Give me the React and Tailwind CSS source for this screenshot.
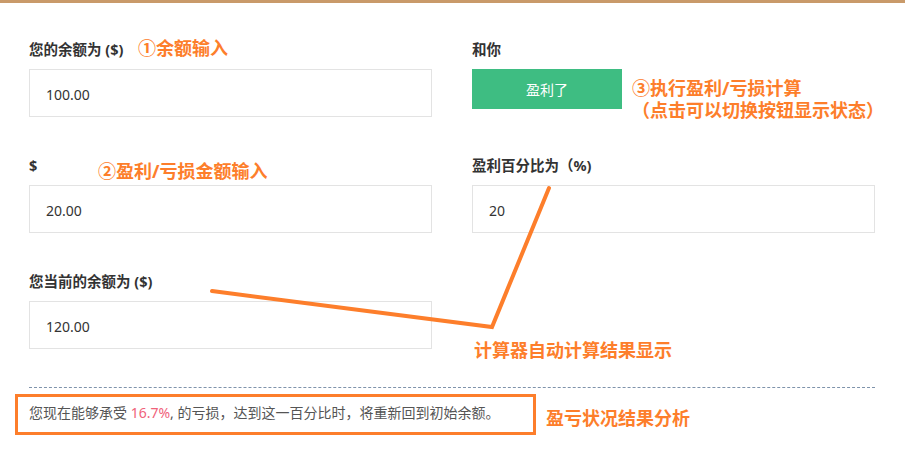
import React from "react";

const font = { fontFamily: '"Noto Sans", "Noto Sans CJK SC", sans-serif' };

function Field({ label, value }) {
  return (
    <div className="flex flex-col">
      <div className="h-[20px] leading-[20px] text-[14.5px] font-bold text-[#333]">{label}</div>
      <div className="mt-[10px] h-[48px] border border-[#e3e3e3] flex items-center pl-[16px] pt-[2px] text-[14px] text-[#333]">
        {value}
      </div>
    </div>
  );
}

export default function App() {
  return (
    <div className="relative w-[905px] h-[456px] bg-white overflow-hidden" style={font}>
      <div className="h-[3px] bg-[#c99a6a]" />
      <div className="pl-[29px] pr-[30px] pt-[36px]">
        <div className="grid grid-cols-2 gap-x-[40px] gap-y-[38px]">
          <Field label="您的余额为 ($)" value="100.00" />
          <div className="flex flex-col">
            <div className="h-[20px] leading-[20px] text-[14.5px] font-bold text-[#333]">和你</div>
            <button className="mt-[10px] h-[40px] w-[150px] bg-[#3ebd82] text-white text-[14px]">盈利了</button>
          </div>
          <Field label="$" value="20.00" />
          <Field label="盈利百分比为（%)" value="20" />
          <Field label="您当前的余额为 ($)" value="120.00" />
          <div />
        </div>
        <div className="mt-[38px] border-t border-dashed border-[#7f93ab]" />
        <div className="relative mt-[15px] h-[20px] leading-[20px] text-[14px] text-[#555]">
          您现在能够承受 <span className="text-[#f0627a]">16.7%</span>, 的亏损，达到这一百分比时，将重新回到初始余额。
          <div className="absolute left-[-14px] top-[-9px] w-[521px] h-[41px] border-[3px] border-[#fd7e2b]" />
        </div>
      </div>

      <svg className="absolute left-0 top-0 pointer-events-none" width="905" height="456">
        <polyline
          points="212,291 492,327 549,188"
          fill="none"
          stroke="#fd7e2b"
          strokeWidth="4"
          strokeLinecap="round"
          strokeLinejoin="miter"
        />
      </svg>

      <div className="absolute left-[138px] top-[36px] text-[18px] leading-[24px] font-bold text-[#fd7e2b]">①余额输入</div>
      <div className="absolute left-[98px] top-[159px] text-[18px] leading-[24px] font-bold text-[#fd7e2b]">②盈利/亏损金额输入</div>
      <div className="absolute left-[632px] top-[77px] text-[18px] leading-[22px] font-bold text-[#fd7e2b]">
        <div>③执行盈利/亏损计算</div>
        <div>（点击可以切换按钮显示状态）</div>
      </div>
      <div className="absolute left-[474px] top-[338px] text-[18px] leading-[24px] font-bold text-[#fd7e2b]">计算器自动计算结果显示</div>
      <div className="absolute left-[546px] top-[406px] text-[18px] leading-[24px] font-bold text-[#fd7e2b]">盈亏状况结果分析</div>
    </div>
  );
}
